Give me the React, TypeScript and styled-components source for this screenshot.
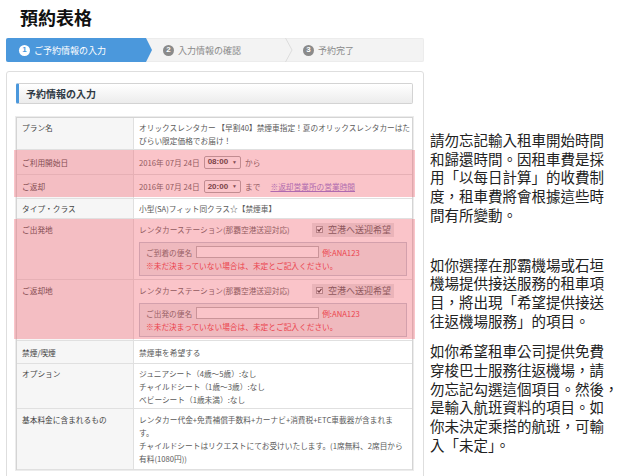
import React from 'react';
import styled, { createGlobalStyle } from 'styled-components';

const GlobalStyle = createGlobalStyle`
  html, body {
    margin: 0;
    padding: 0;
    background: #fff;
  }
  body {
    font-family: "Noto Sans CJK JP", "Noto Sans", sans-serif;
  }
`;

const Page = styled.div`
  display: flex;
  width: 630px;
  height: 476px;
  overflow: hidden;
`;

const Main = styled.div`
  flex-shrink: 0;
  width: 418px;
  padding-left: 6px;
`;

const Title = styled.h1`
  margin: 0 0 9px;
  padding: 5px 0 0 14px;
  font: bold 18px/24px "Noto Sans CJK TC", sans-serif;
  color: #111;
`;

/* ---------- step bar ---------- */

const StepBar = styled.div`
  display: flex;
  align-items: stretch;
  height: 24px;
  background: #f3f3f3;
  border-radius: 2px;
  box-shadow: inset 0 0 0 1px #ececec;
`;

const Step = styled.div<{ $active?: boolean; $w?: number; $pl: number }>`
  display: flex;
  align-items: center;
  gap: 4px;
  width: ${p => (p.$w ? `${p.$w}px` : 'auto')};
  padding-left: ${p => p.$pl}px;
  box-sizing: border-box;
  font-size: 9px;
  color: ${p => (p.$active ? '#fff' : '#8a8a8a')};
  background: ${p => (p.$active ? '#4b98dc' : 'transparent')};
  border-radius: ${p => (p.$active ? '2px 0 0 2px' : '0')};
  clip-path: ${p =>
    p.$active
      ? 'polygon(0 0, calc(100% - 6px) 0, 100% 50%, calc(100% - 6px) 100%, 0 100%)'
      : 'none'};
`;

const StepNum = styled.span<{ $active?: boolean }>`
  display: inline-flex;
  align-items: center;
  justify-content: center;
  width: 11px;
  height: 11px;
  border-radius: 50%;
  font: bold 8px/1 "Liberation Sans", sans-serif;
  background: ${p => (p.$active ? '#fff' : '#8a8a8a')};
  color: ${p => (p.$active ? '#4b98dc' : '#fff')};
`;

const Chevron = () => (
  <svg width="8" height="24" viewBox="0 0 8 24">
    <polyline points="0.5,0 7,12 0.5,24" fill="none" stroke="#dcdcdc" strokeWidth="1" />
  </svg>
);

/* ---------- card ---------- */

const Card = styled.div`
  margin-top: 9px;
  padding: 11px 10px 12px 9px;
  border: 1px solid #dedede;
  border-radius: 3px;
  background: #fff;
`;

const SectionHead = styled.div`
  height: 19px;
  display: flex;
  align-items: center;
  padding-left: 7px;
  margin-bottom: 13px;
  border: 1px solid #d3d3d3;
  border-left: 3px solid #4b98dc;
  border-radius: 2px;
  background: linear-gradient(#ffffff, #ececec);
  font-size: 10px;
  font-weight: bold;
  color: #2f3a45;
`;

const Table = styled.div`
  border: 1px solid #d4d4d4;
  border-bottom: none;
  box-shadow: 0 0 0 1px #ececec;
  font-size: 7.7px;
  line-height: 13px;
`;

const Highlight = styled.div`
  position: relative;

  &::after {
    content: '';
    position: absolute;
    inset: 0 -3px 2px -3px;
    background: rgba(240, 92, 104, 0.36);
    pointer-events: none;
  }
`;

const Row = styled.div<{ $py: number }>`
  display: grid;
  grid-template-columns: 117px 1fr;
  border-bottom: 1px solid #e0e0e0;

  > * {
    padding: ${p => p.$py}px 5px;
  }
`;

const Label = styled.div`
  background: #f6f6f6;
  border-right: 1px solid #e0e0e0;
  color: #444;
  white-space: nowrap;
`;

const Value = styled.div`
  color: #5a5a5a;
  white-space: nowrap;
`;

const Inline = styled.div`
  display: flex;
  align-items: center;
  gap: 4px;
  height: 13px;
`;

const SelectBox = styled.span`
  display: inline-flex;
  align-items: center;
  gap: 4px;
  height: 11px;
  padding: 0 3px;
  border: 1px solid #a8a8a8;
  border-radius: 2px;
  background: #fff;
  font: bold 8px/1 "Liberation Sans", sans-serif;
  color: #333;

  &::after {
    content: '▼';
    font-size: 5px;
    color: #444;
  }
`;

const Link = styled.span`
  margin-left: 6px;
  color: #8a73d6;
  text-decoration: underline;
`;

const StationLine = styled.div`
  display: flex;
  align-items: center;
  height: 14px;
`;

const Station = styled.span`
  width: 173px;
`;

const CheckLabel = styled.span`
  display: inline-flex;
  align-items: center;
  gap: 5px;
  height: 14px;
  padding: 0 3px 0 4px;
  background: #e6e6e6;
  font-size: 9px;
  color: #555;
`;

const CheckBox = () => (
  <svg width="7" height="7" viewBox="0 0 7 7">
    <rect x="0.5" y="0.5" width="6" height="6" fill="#fff" stroke="#999" />
    <polyline points="1.5,3.5 3,5 5.5,1.8" fill="none" stroke="#333" strokeWidth="1.2" />
  </svg>
);

const FlightBox = styled.div`
  margin-top: 5px;
  padding: 3px 6px;
  border: 1px solid #c3c7d2;
  background: #eeeeee;
`;

const FlightLine = styled.div`
  display: flex;
  align-items: center;
  height: 13px;
  color: #666;
`;

const Input = styled.span`
  display: inline-block;
  width: 121px;
  height: 10px;
  margin: 0 3px 0 4px;
  border: 1px solid #b5b5b5;
  background: #fff;
`;

const Red = styled.span`
  color: #e8333b;
`;

/* ---------- side notes ---------- */

const Aside = styled.div`
  margin-left: 6px;
  padding-top: 131px;
  font-family: "Noto Sans CJK TC", sans-serif;
  font-size: 14.5px;
  line-height: 18.7px;
  color: #222;
  white-space: nowrap;
`;

const Note = styled.p<{ $mt: number }>`
  margin: ${p => p.$mt}px 0 0;
`;

const FlightFields: React.FC<{ name: string }> = ({ name }) => (
  <FlightBox>
    <FlightLine>
      {name}
      <Input />
      <Red>例:ANA123</Red>
    </FlightLine>
    <FlightLine>
      <Red>※未だ決まっていない場合は、未定とご記入ください。</Red>
    </FlightLine>
  </FlightBox>
);

export default function App() {
  return (
    <Page>
      <GlobalStyle />
      <Main>
        <Title>預約表格</Title>

        <StepBar>
          <Step $active $w={146} $pl={13}>
            <StepNum $active>1</StepNum>ご予約情報の入力
          </Step>
          <Step $w={133} $pl={11}>
            <StepNum>2</StepNum>入力情報の確認
          </Step>
          <Chevron />
          <Step $pl={10}>
            <StepNum>3</StepNum>予約完了
          </Step>
        </StepBar>

        <Card>
          <SectionHead>予約情報の入力</SectionHead>

          <Table>
            <Row $py={2.5}>
              <Label>プラン名</Label>
              <Value>
                オリックスレンタカー 【早割40】禁煙車指定！夏のオリックスレンタカーはた
                <br />
                びらい限定価格でお届け！
              </Value>
            </Row>

            <Highlight>
              <Row $py={5.5}>
                <Label>ご利用開始日</Label>
                <Value>
                  <Inline>
                    2016年 07月 24日 <SelectBox>08:00</SelectBox> から
                  </Inline>
                </Value>
              </Row>
              <Row $py={5}>
                <Label>ご返却</Label>
                <Value>
                  <Inline>
                    2016年 07月 24日 <SelectBox>20:00</SelectBox> まで
                    <Link>※返却営業所の営業時間</Link>
                  </Inline>
                </Value>
              </Row>
            </Highlight>

            <Row $py={3}>
              <Label>タイプ・クラス</Label>
              <Value>小型(SA)フィット同クラス☆【禁煙車】</Value>
            </Row>

            <Highlight>
              <Row $py={3.5}>
                <Label>ご出発地</Label>
                <Value>
                  <StationLine>
                    <Station>レンタカーステーション(那覇空港送迎対応)</Station>
                    <CheckLabel>
                      <CheckBox />
                      空港へ送迎希望
                    </CheckLabel>
                  </StationLine>
                  <FlightFields name="ご到着の便名" />
                </Value>
              </Row>
              <Row $py={3.5}>
                <Label>ご返却地</Label>
                <Value>
                  <StationLine>
                    <Station>レンタカーステーション(那覇空港送迎対応)</Station>
                    <CheckLabel>
                      <CheckBox />
                      空港へ送迎希望
                    </CheckLabel>
                  </StationLine>
                  <FlightFields name="ご出発の便名" />
                </Value>
              </Row>
            </Highlight>

            <Row $py={4.5}>
              <Label>禁煙/喫煙</Label>
              <Value>禁煙車を希望する</Value>
            </Row>

            <Row $py={2.5}>
              <Label>オプション</Label>
              <Value>
                ジュニアシート（4歳～5歳）:なし
                <br />
                チャイルドシート（1歳～3歳）:なし
                <br />
                ベビーシート（1歳未満）:なし
              </Value>
            </Row>

            <Row $py={4}>
              <Label>基本料金に含まれるもの</Label>
              <Value>
                レンタカー代金+免責補償手数料+カーナビ+消費税+ETC車載器が含まれま
                <br />
                す。
                <br />
                チャイルドシートはリクエストにてお受けいたします。(1席無料、2席目から
                <br />
                有料(1080円))
              </Value>
            </Row>
          </Table>
        </Card>
      </Main>

      <Aside>
        <Note $mt={0}>
          請勿忘記輸入租車開始時間
          <br />
          和歸還時間。因租車費是採
          <br />
          用「以每日計算」的收費制
          <br />
          度，租車費將會根據這些時
          <br />
          間有所變動。
        </Note>
        <Note $mt={31}>
          如你選擇在那霸機場或石垣
          <br />
          機場提供接送服務的租車項
          <br />
          目，將出現「希望提供接送
          <br />
          往返機場服務」的項目。
        </Note>
        <Note $mt={12}>
          如你希望租車公司提供免費
          <br />
          穿梭巴士服務往返機場，請
          <br />
          勿忘記勾選這個項目。然後，
          <br />
          是輸入航班資料的項目。如
          <br />
          你未決定乘搭的航班，可輸
          <br />
          入「未定」。
        </Note>
      </Aside>
    </Page>
  );
}
